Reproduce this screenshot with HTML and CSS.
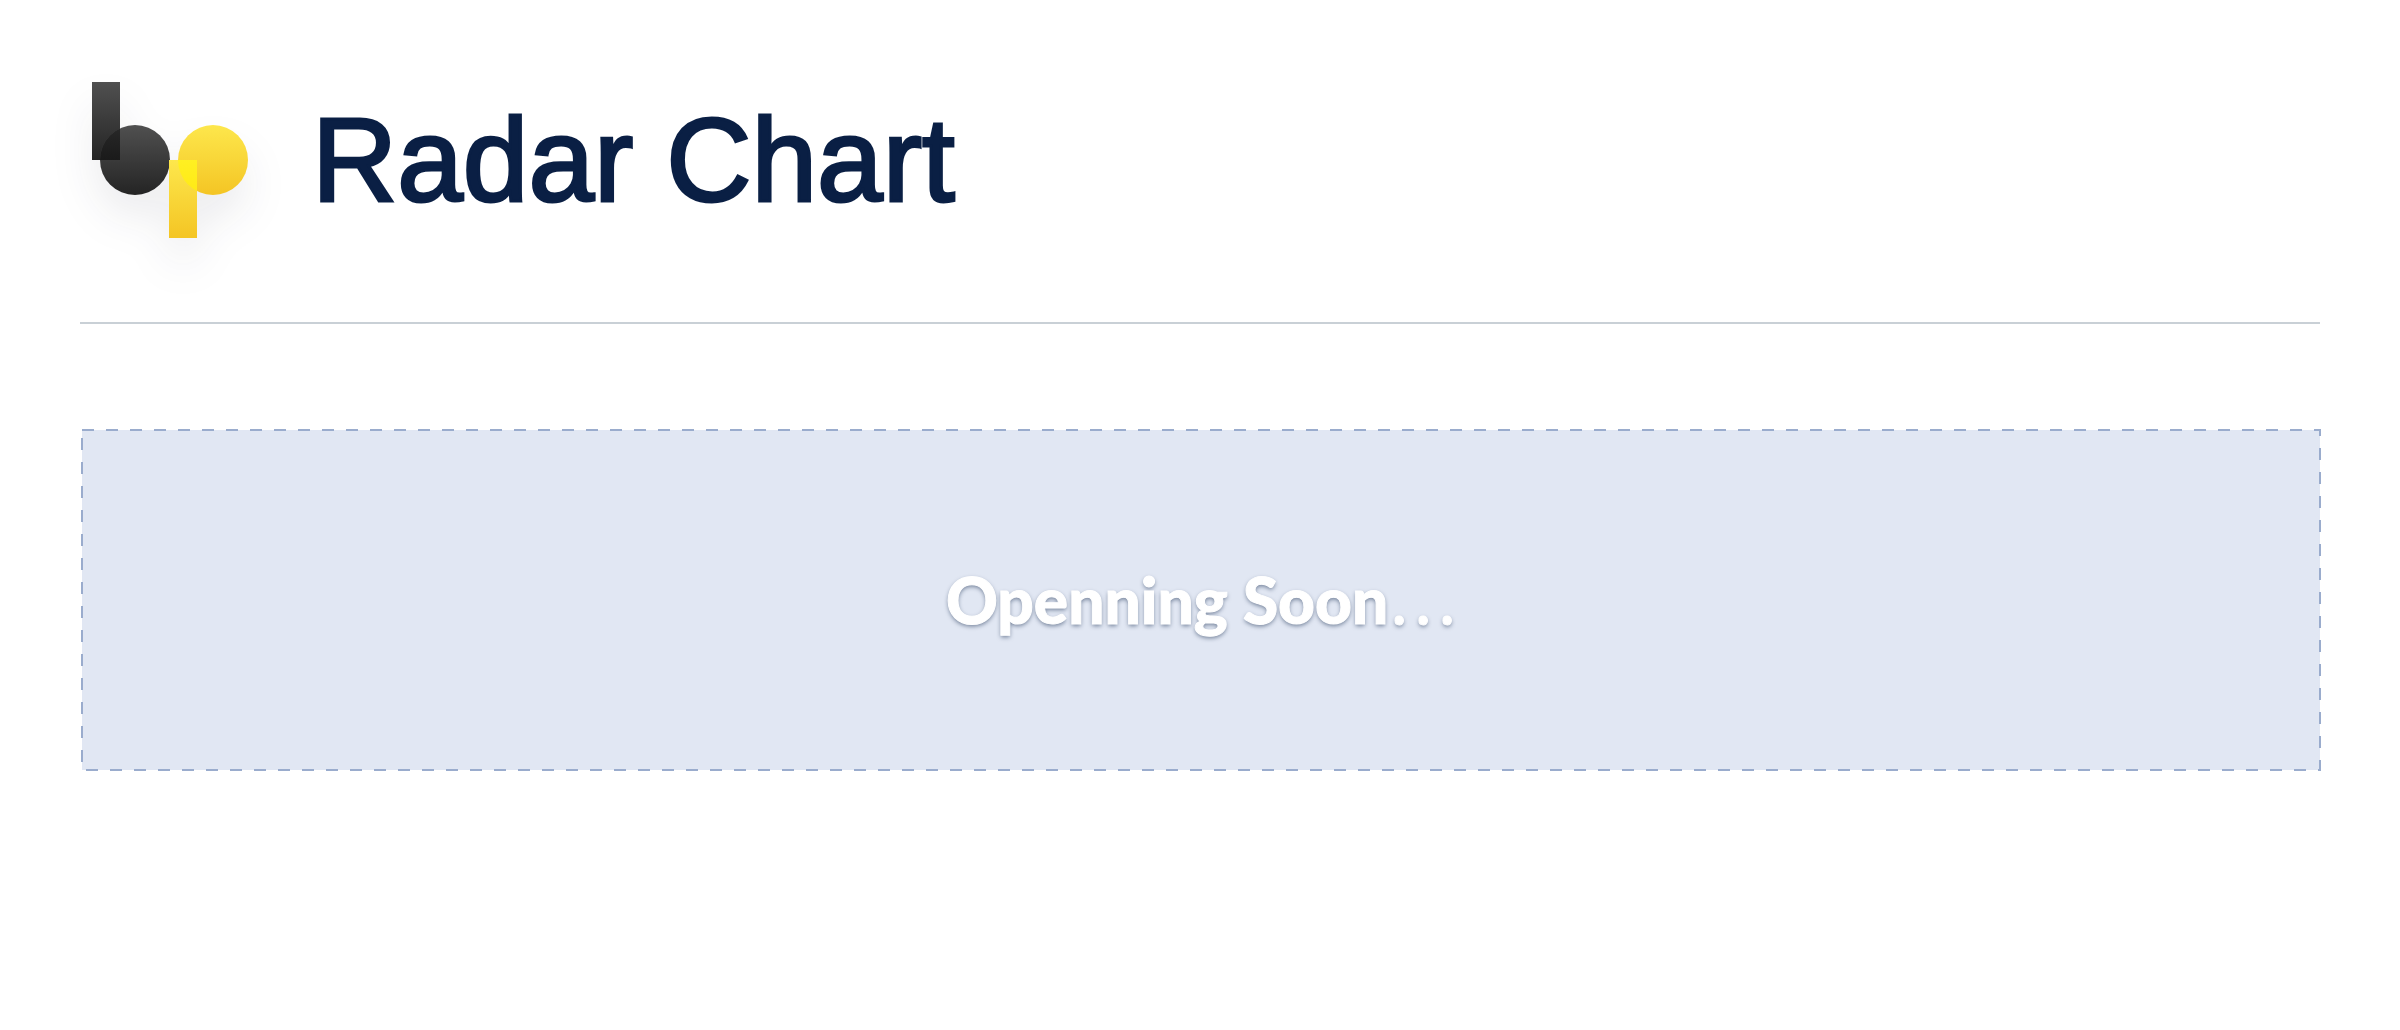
FILE: index.html
```html
<!DOCTYPE html>
<html lang="en">
<head>
<meta charset="utf-8">
<meta name="viewport" content="width=device-width, initial-scale=1">
<title>Radar Chart</title>
<link rel="stylesheet" href="styles.css">
</head>
<body>
<header class="header">
  <svg class="logo" width="156" height="156" viewBox="0 0 156 156" role="img" aria-label="bp">
    <defs>
      <linearGradient id="dark" x1="0" y1="0" x2="0" y2="1"><stop offset="0" stop-color="#505050"/><stop offset="1" stop-color="#242424"/></linearGradient>
      <linearGradient id="gold" x1="0" y1="0" x2="0" y2="1"><stop offset="0" stop-color="#fde74c"/><stop offset="1" stop-color="#f4c524"/></linearGradient>
      <linearGradient id="darkOverlap" x1="0" y1="0" x2="0" y2="1"><stop offset="0" stop-color="#292929"/><stop offset="1" stop-color="#1a1a1a"/></linearGradient>
      <linearGradient id="goldOverlap" x1="0" y1="0" x2="0" y2="1"><stop offset="0" stop-color="#fff022"/><stop offset="1" stop-color="#ffe915"/></linearGradient>
      <clipPath id="darkCircle"><circle cx="55" cy="78" r="35"/></clipPath>
      <clipPath id="goldCircle"><circle cx="133" cy="78" r="35"/></clipPath>
    </defs>
    <rect x="12" width="28" height="78" fill="url(#dark)"/>
    <circle cx="55" cy="78" r="35" fill="url(#dark)"/>
    <rect x="12" y="43" width="28" height="35" fill="url(#darkOverlap)" clip-path="url(#darkCircle)"/>
    <circle cx="133" cy="78" r="35" fill="url(#gold)"/>
    <rect x="89" y="78" width="28" height="78" fill="url(#gold)"/>
    <rect x="89" y="78" width="28" height="35" fill="url(#goldOverlap)" clip-path="url(#goldCircle)"/>
  </svg>
  <h1 class="title">Radar Chart</h1>
</header>
<main class="panel">
  <svg class="outline" aria-hidden="true"><rect width="100%" height="100%"/></svg>
  <p class="message">Openning Soon<span class="dots">…</span></p>
</main>
</body>
</html>
```
FILE: styles.css
```css
* {
  box-sizing: border-box;
}

body {
  margin: 0;
  padding: 0 80px 80px;
  background: #fff;
}

.header {
  display: flex;
  align-items: center;
  gap: 76px;
  padding: 82px 0 84px;
  border-bottom: 2px solid #c9d0d6;
}

.logo {
  flex: none;
  overflow: visible;
  filter: drop-shadow(0 24px 20px rgb(20 30 50 / 8%));
}

.title {
  margin: 0;
  color: #0a1f44;
  font: 400 118px/156px "Liberation Sans", Arial, sans-serif;
  -webkit-text-stroke: 3px #0a1f44;
}

.panel {
  position: relative;
  display: flex;
  align-items: center;
  justify-content: center;
  min-height: 340px;
  margin: 106px 0 0 2px;
  background: #e1e7f3;
}

.outline {
  position: absolute;
  inset: 0;
  width: 100%;
  height: 100%;
  overflow: visible;
  fill: none;
  stroke: #9aaccd;
  stroke-width: 2px;
  stroke-dasharray: 12 12;
}

.message {
  position: relative;
  margin: 0;
  color: #fff;
  font: 900 64px/76px Lato, sans-serif;
  -webkit-text-stroke: 1px #fff;
  text-shadow: 0 2px 4px rgb(10 31 68 / 50%);
}

.dots {
  font-family: "Noto Sans CJK KR", sans-serif;
  font-weight: 400;
  line-height: 1px;
}
```
